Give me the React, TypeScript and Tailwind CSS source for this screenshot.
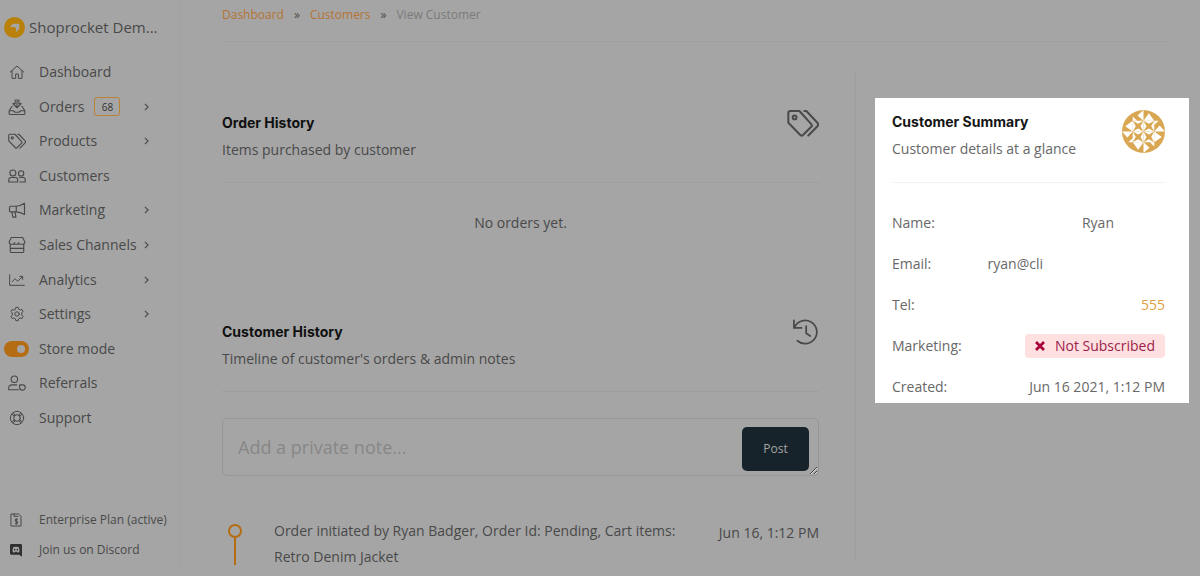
import type { ReactNode } from 'react';

type NavItem = {
  label: string;
  icon: ReactNode;
  badge?: string;
  expandable?: boolean;
};

const NAV_TOP: NavItem[] = [
  { label: 'Dashboard', icon: <HomeIcon /> },
  { label: 'Orders', icon: <OrdersIcon />, badge: '68', expandable: true },
  { label: 'Products', icon: <TagsIcon className="size-[18px]" />, expandable: true },
  { label: 'Customers', icon: <CustomersIcon /> },
  { label: 'Marketing', icon: <MegaphoneIcon />, expandable: true },
  { label: 'Sales Channels', icon: <StoreIcon />, expandable: true },
  { label: 'Analytics', icon: <ChartIcon />, expandable: true },
  { label: 'Settings', icon: <GearIcon />, expandable: true },
];

const NAV_BOTTOM: NavItem[] = [
  { label: 'Referrals', icon: <ReferralIcon /> },
  { label: 'Support', icon: <LifeRingIcon /> },
];

export default function App() {
  return (
    <div className="flex min-h-screen bg-[#a5a5a5] font-['Open_Sans',sans-serif] text-sm text-[#494949]">
      <Sidebar />
      <main className="min-w-0 flex-1 pr-[11px] pl-[41px]">
        <Breadcrumbs />
        <div className="mt-[30px] flex">
          <div className="min-w-0 flex-1 border-r-2 border-[#a0a0a0] pr-[35px]">
            <OrderHistory />
            <CustomerHistory />
          </div>
          <CustomerSummary />
        </div>
      </main>
    </div>
  );
}

function Sidebar() {
  return (
    <aside className="mb-[6px] flex w-[181px] shrink-0 flex-col border-r border-[#a0a0a0]">
      <a href="#" className="flex items-center gap-1 pt-[15px] pl-1">
        <LogoIcon />
        <span className="text-[15px] leading-6">Shoprocket Dem...</span>
      </a>
      <nav className="mt-4 grid h-[380px] auto-rows-fr">
        {NAV_TOP.map((item) => (
          <NavLink key={item.label} item={item} />
        ))}
        <label className="flex items-center pl-1">
          <input
            type="checkbox"
            defaultChecked
            className="relative h-4 w-[25px] appearance-none rounded-full bg-[#b56d13] before:absolute before:top-1 before:right-1 before:size-2 before:rounded-full before:bg-[#a5a5a5]"
          />
          <span className="ml-[10px]">Store mode</span>
        </label>
        {NAV_BOTTOM.map((item) => (
          <NavLink key={item.label} item={item} />
        ))}
      </nav>
      <div className="mt-auto mr-[13px] mb-[5px] text-xs">
        <a href="#" className="flex h-[30px] items-center pl-2 whitespace-nowrap">
          <InvoiceIcon />
          <span className="ml-[15px]">Enterprise Plan (active)</span>
        </a>
        <a href="#" className="flex h-[30px] items-center pl-2 whitespace-nowrap">
          <DiscordIcon />
          <span className="ml-[15px]">Join us on Discord</span>
        </a>
      </div>
    </aside>
  );
}

function NavLink({ item }: { item: NavItem }) {
  return (
    <a href="#" className="flex items-center pr-[31px] pl-2 whitespace-nowrap">
      <span className="flex w-[17px] shrink-0 justify-center">{item.icon}</span>
      <span className="ml-[14px]">{item.label}</span>
      {item.badge && (
        <span className="ml-[10px] flex h-[19px] w-[26px] items-center justify-center rounded-[3px] border border-[#b98235] text-[10px] text-[#333]">
          {item.badge}
        </span>
      )}
      {item.expandable && (
        <svg viewBox="0 0 6 10" className="ml-auto h-2 w-[5px] shrink-0" fill="none" stroke="currentColor" strokeWidth="1.4">
          <path d="M1 1l4 4-4 4" />
        </svg>
      )}
    </a>
  );
}

function Breadcrumbs() {
  return (
    <nav className="mr-[21px] flex h-[42px] gap-[10px] border-b border-[#9e9e9e] pt-[5px] text-xs leading-5">
      <a href="#" className="text-[#b57433]">Dashboard</a>
      <span>»</span>
      <a href="#" className="text-[#b57433]">Customers</a>
      <span>»</span>
      <span className="text-[#7b7b7b]">View Customer</span>
    </nav>
  );
}

function SectionHeader({ title, subtitle, icon }: { title: string; subtitle: string; icon: ReactNode }) {
  return (
    <header className="flex h-[72px] justify-between border-b border-[#9e9e9e]">
      <div>
        <h2 className="font-['Inter',sans-serif] leading-6 font-bold text-[#101010]">{title}</h2>
        <p className="mt-[3px] leading-6">{subtitle}</p>
      </div>
      {icon}
    </header>
  );
}

function OrderHistory() {
  return (
    <section className="pt-[39px]">
      <SectionHeader
        title="Order History"
        subtitle="Items purchased by customer"
        icon={<TagsIcon className="-mt-1 size-8" />}
      />
      <p className="pt-7 text-center leading-6">No orders yet.</p>
    </section>
  );
}

function CustomerHistory() {
  return (
    <section className="pt-[85px]">
      <SectionHeader
        title="Customer History"
        subtitle="Timeline of customer's orders & admin notes"
        icon={<HistoryIcon />}
      />
      <form className="relative mt-[26px]">
        <textarea
          aria-label="Private note"
          placeholder="Add a private note..."
          className="block h-[58px] w-full resize-y overflow-hidden rounded-[5px] border border-[#979797] bg-transparent px-[15px] py-[14px] text-lg leading-7 placeholder:text-[#878787]"
        />
        <button
          type="button"
          className="absolute top-[9px] right-[10px] h-11 w-[67px] rounded-[5px] bg-[#17232b] text-xs text-[#a5a5a5]"
        >
          Post
        </button>
      </form>
      <div className="mt-[42px] flex h-[42px]">
        <svg viewBox="0 0 16 42" className="mt-[5px] ml-[5px] h-[42px] w-4 shrink-0" fill="none" stroke="#b56d13" strokeWidth="2">
          <circle cx="8" cy="8" r="6" />
          <path d="M8 14v28" />
        </svg>
        <p className="ml-[31px] w-[410px] leading-[26px]">
          Order initiated by Ryan Badger, Order Id: Pending, Cart items: Retro Denim Jacket
        </p>
        <time className="mt-[2px] ml-auto leading-[26px] whitespace-nowrap">Jun 16, 1:12 PM</time>
      </div>
    </section>
  );
}

function CustomerSummary() {
  return (
    <section className="mt-[26px] ml-[19px] w-[314px] self-start bg-white pt-3 pr-6 pb-1 pl-[17px] text-[#686868]">
      <header className="flex h-[73px] justify-between border-b border-[#f2f2f2]">
        <div>
          <h2 className="font-['Inter',sans-serif] leading-6 font-bold text-[#151515]">Customer Summary</h2>
          <p className="mt-[3px] leading-6">Customer details at a glance</p>
        </div>
        <Identicon />
      </header>
      <dl className="mt-7 flex flex-col gap-[17px] leading-6">
        <SummaryRow label="Name:">
          <span className="pr-[51px]">Ryan</span>
        </SummaryRow>
        <SummaryRow label="Email:">
          <span className="pr-[122px]">ryan@cli</span>
        </SummaryRow>
        <SummaryRow label="Tel:">
          <a href="tel:555" className="text-[#e0a043]">555</a>
        </SummaryRow>
        <SummaryRow label="Marketing:">
          <span className="flex items-center gap-[10px] rounded-[4px] bg-[#ffe0e0] px-[10px] text-[#9c1c4b]">
            <svg viewBox="0 0 10 10" className="size-[10px]" fill="none" stroke="#a8003c" strokeWidth="2.6">
              <path d="M1 1l8 8M9 1L1 9" />
            </svg>
            Not Subscribed
          </span>
        </SummaryRow>
        <SummaryRow label="Created:">Jun 16 2021, 1:12 PM</SummaryRow>
      </dl>
    </section>
  );
}

function SummaryRow({ label, children }: { label: string; children: ReactNode }) {
  return (
    <div className="flex justify-between whitespace-nowrap">
      <dt>{label}</dt>
      <dd>{children}</dd>
    </div>
  );
}

// Rotationally symmetric 4x4 pattern clipped to a circle.
function Identicon() {
  return (
    <svg viewBox="0 0 40 40" className="size-[43px]">
      <defs>
        <clipPath id="avatar">
          <circle cx="20" cy="20" r="20" />
        </clipPath>
      </defs>
      <g clipPath="url(#avatar)">
        <rect width="40" height="40" fill="#d9a752" />
        {[0, 90, 180, 270].map((angle) => (
          <g key={angle} transform={`rotate(${angle} 20 20)`} fill="#fff">
            <path d="M20 0v10l-5.500-5z" />
            <path d="M20 10h10l-5-7z" />
            <path d="M10 10h4l-4-4z" />
            <path d="M10 10l5 2.800 5-2.800 -2.800 5 2.800 5-5-2.800-5 2.800 2.800-5zM10 10h10v10H10z" fillRule="evenodd" />
          </g>
        ))}
      </g>
    </svg>
  );
}

function LogoIcon() {
  return (
    <svg viewBox="0 0 22 22" className="size-[21px] shrink-0">
      <circle cx="11" cy="11" r="11" fill="#b9800a" />
      <path d="M6 10.500L9.500 7H16v5.500L12.500 16v-4.500L11 10.500z" fill="#a5a5a5" />
    </svg>
  );
}

function Icon({ children, className = 'size-4' }: { children: ReactNode; className?: string }) {
  return (
    <svg
      viewBox="0 0 24 24"
      className={`shrink-0 ${className}`}
      fill="none"
      stroke="currentColor"
      strokeWidth="1.5"
      strokeLinecap="round"
      strokeLinejoin="round"
    >
      {children}
    </svg>
  );
}

function HomeIcon() {
  return (
    <Icon>
      <path d="M2 12L12 3l10 9M4.500 10v11.500H10V15h4v6.500h5.500V10" />
    </Icon>
  );
}

function OrdersIcon() {
  return (
    <Icon className="size-[18px]">
      <path d="M12 2v10.500M8 9l4 4 4-4M9.500 2.500v5H6.500L12 13l5.500-5.500h-3v-5M5.500 11L1.500 17v3.500c0 .8.500 1.500 1.500 1.500h18c1 0 1.500-.7 1.500-1.500V17l-4-6M1.500 17H7l2.500 2h5l2.500-2h5.500" />
    </Icon>
  );
}

function TagsIcon({ className }: { className: string }) {
  return (
    <Icon className={className}>
      <path d="M1 4.500v7.300L10 21a1.500 1.500 0 0 0 2 0l6.200-6.200a1.500 1.500 0 0 0 0-2L9.300 3H2.500A1.500 1.500 0 0 0 1 4.500z" />
      <path d="M13 3h1.500l8.300 8.800a2 2 0 0 1 0 2.600l-6.800 7" />
      <circle cx="5.700" cy="7.800" r="1.400" />
    </Icon>
  );
}

function CustomersIcon() {
  return (
    <Icon className="size-[18px]">
      <circle cx="6.500" cy="8" r="4" />
      <circle cx="17.500" cy="8.500" r="3.500" />
      <path d="M1 20v-2.500C1 15.500 2.500 14 4.500 14h5c2 0 3.500 1.500 3.500 3.500V20zM16 20h7v-2.500c0-2-1.300-3.500-3-3.500h-4.500" />
    </Icon>
  );
}

function MegaphoneIcon() {
  return (
    <Icon className="size-[18px]">
      <path d="M3.500 7H11c4 0 7-1.500 11-4v15c-4-2.500-7-3.500-11-3.500H3.500A1.500 1.500 0 0 1 2 13V8.500A1.500 1.500 0 0 1 3.500 7zM11 7v7.500M5 14.500l1.500 7h4l-1-7M22 9v3" />
    </Icon>
  );
}

function StoreIcon() {
  return (
    <Icon className="size-[18px]">
      <path d="M4.500 2h15L22.500 8c0 2-1.500 3-3 3h-15c-1.500 0-3-1-3-3zM3 11v9.500c0 1 .5 1.500 1.500 1.500h15c1 0 1.500-.5 1.500-1.500V11M3 16.500h18M7.500 10.500l1.500-1.500M13 10.500l1.500-1.500" />
    </Icon>
  );
}

function ChartIcon() {
  return (
    <Icon>
      <path d="M1 4v16h22M5 14.500l4-4.500 4 4 7-7M16 6.500h4.500V11" />
    </Icon>
  );
}

function GearIcon() {
  return (
    <Icon>
      <path d="M9.600 4.600l.7-2.600h3.400l.7 2.600 2.400 1.400 2.600-.7 1.700 3-1.900 1.900v3.600l1.900 1.900-1.700 3-2.600-.7-2.400 1.400-.7 2.600h-3.400l-.7-2.600L7.200 18l-2.600.7-1.700-3 1.900-1.900v-3.600L2.900 8.300l1.700-3 2.600.7z" />
      <circle cx="12" cy="12" r="3.300" />
    </Icon>
  );
}

function ReferralIcon() {
  return (
    <Icon className="size-[18px]">
      <circle cx="8.500" cy="7" r="4.300" />
      <path d="M14 21H1v-2.500C1 16 3 14.500 5.500 14.500h6M15.500 14.500h4a3.500 3.500 0 0 1 0 7c-2.500 0-4-2-4-4z" />
    </Icon>
  );
}

function LifeRingIcon() {
  return (
    <Icon>
      <circle cx="12" cy="12" r="10" />
      <circle cx="12" cy="12" r="5" />
      <path d="M4.500 6.500l4 3M6.500 4.500l3 4M19.500 6.500l-4 3M17.500 4.500l-3 4M4.500 17.500l4-3M6.500 19.500l3-4M19.500 17.500l-4-3M17.500 19.500l-3-4" />
    </Icon>
  );
}

function HistoryIcon() {
  return (
    <Icon className="-mt-[2px] size-7">
      <path d="M2.500 2v6.500H9M3 8a10 10 0 1 1 2.500 11.500M13 7v6l3.500 2.500" />
    </Icon>
  );
}

function InvoiceIcon() {
  return (
    <Icon>
      <path d="M5 3h11l3.500 3.500V21H5zM9 3v3.500h6M14 11h-3v3h3v3.500h-3M12.500 10v8.500" />
    </Icon>
  );
}

function DiscordIcon() {
  return (
    <svg viewBox="0 0 24 24" className="size-4 shrink-0">
      <path d="M5 3h14a2 2 0 0 1 2 2v17l-4-3H5a2 2 0 0 1-2-2V5a2 2 0 0 1 2-2z" fill="#303030" />
      <path d="M7 15c-.5-3 0-5 1-7 1-.8 2-1 3-1h2c1 0 2 .2 3 1 1 2 1.500 4 1 7l-2.500 1-1-1.500h-3l-1 1.500z" fill="#a5a5a5" />
      <circle cx="10" cy="11.500" r="1.200" fill="#303030" />
      <circle cx="14" cy="11.500" r="1.200" fill="#303030" />
    </svg>
  );
}
